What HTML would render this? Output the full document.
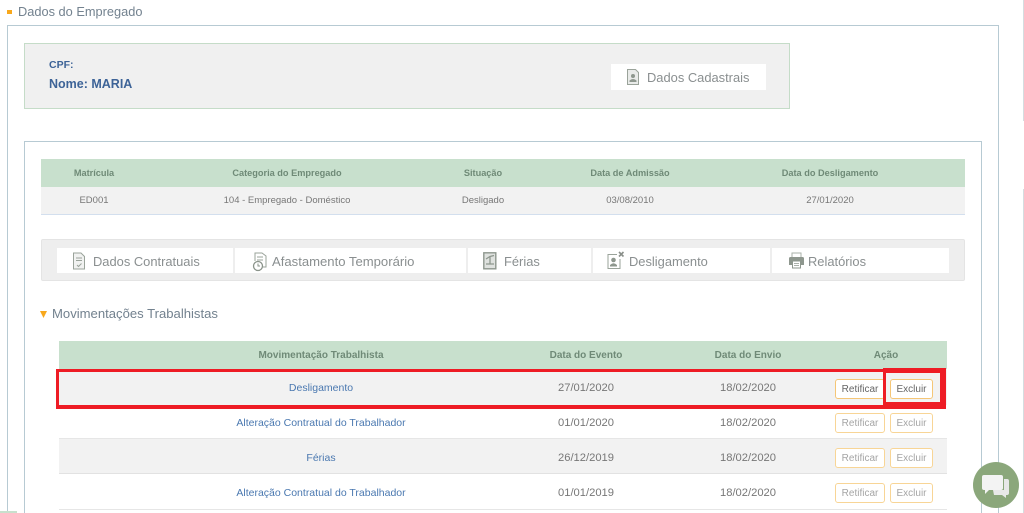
<!DOCTYPE html>
<html lang="pt-BR"><head><meta charset="utf-8"><title>Dados do Empregado</title>
<style>
html,body{margin:0;padding:0;background:#fff}
#p{position:relative;width:1024px;height:513px;overflow:hidden;background:#fff;font-family:"Liberation Sans",sans-serif;filter:blur(.3px)}
#p div,#p svg{position:absolute;box-sizing:border-box}
.t{white-space:nowrap;text-align:center;line-height:16px;height:16px}
.h{font-size:9.2px;color:#6f8a77;font-weight:bold}
.c{font-size:9.5px;color:#777}
.h2{font-size:10px;color:#6f8a77;font-weight:bold}
.c2{font-size:11.2px;color:#777}
.l{font-size:10.5px;color:#4a78b0}
.tab{background:#fff;height:25px;top:248px}
.tl{font-size:12.9px;color:#8a8f90;white-space:nowrap;line-height:16px;height:16px}
.b{height:20px;background:#fff;border:1px solid #f8d596;border-radius:3px;font-size:10px;color:#a5a5a5;text-align:center;line-height:20px}
.dark{border-color:#f5c676;color:#666}
.red{background:#ee1c25}
</style></head><body><div id="p">
<div style="left:7px;top:10px;width:5px;height:4px;background:#f8a81c"></div>
<div class="t" style="left:18px;top:4px;font-size:12.8px;color:#73828f">Dados do Empregado</div>
<div style="left:7px;top:25px;width:992px;height:488px;border:1px solid #b7cad3;border-bottom:0"></div>
<div style="left:24px;top:43px;width:766px;height:66px;background:#f0f0f0;border:1px solid #c5dcc8"></div>
<div class="t" style="left:49px;top:57px;font-size:10.5px;font-weight:bold;color:#3d6397">CPF:</div>
<div class="t" style="left:49px;top:76px;font-size:12.5px;font-weight:bold;color:#3d6397">Nome: MARIA</div>
<div style="left:611px;top:64px;width:155px;height:26px;background:#fff"></div>
<svg style="left:626px;top:68px" width="14" height="18" viewBox="0 0 14 18"><path d="M1.500 1.500H9.500L12.500 4.500V16.500H1.500Z" fill="#e9ebe9" stroke="#9aa39a"/><circle cx="7" cy="8" r="2" fill="#8e978e"/><path d="M3.500 14V12.500Q7 9.500 10.500 12.500V14Z" fill="#8e978e"/></svg>
<div class="tl" style="left:647px;top:70px">Dados Cadastrais</div>
<div style="left:24px;top:141px;width:958px;height:372px;border:1px solid #b7cad3;border-bottom:0"></div>
<div style="left:41px;top:159px;width:924px;height:28px;background:#c8e0cd"></div>
<div style="left:41px;top:187px;width:924px;height:28px;background:#f2f2f2;border-bottom:1px solid #d3dfee"></div>
<div class="t h" style="left:44px;width:100px;top:165px">Matrícula</div>
<div class="t h" style="left:187px;width:200px;top:165px">Categoria do Empregado</div>
<div class="t h" style="left:433px;width:100px;top:165px">Situação</div>
<div class="t h" style="left:570px;width:120px;top:165px">Data de Admissão</div>
<div class="t h" style="left:750px;width:160px;top:165px">Data do Desligamento</div>
<div class="t c" style="left:44px;width:100px;top:193px">ED001</div>
<div class="t c" style="left:187px;width:200px;top:193px">104 - Empregado - Doméstico</div>
<div class="t c" style="left:433px;width:100px;top:193px">Desligado</div>
<div class="t c" style="left:570px;width:120px;top:193px">03/08/2010</div>
<div class="t c" style="left:750px;width:160px;top:193px">27/01/2020</div>

<div style="left:41px;top:239px;width:924px;height:42px;background:#eee;border:1px solid #e4e4e4;border-radius:2px"></div>
<div class="tab" style="left:57px;width:176px"></div>
<div class="tab" style="left:235px;width:231px"></div>
<div class="tab" style="left:468px;width:123px"></div>
<div class="tab" style="left:593px;width:177px"></div>
<div class="tab" style="left:772px;width:177px"></div>
<svg style="left:72px;top:252px" width="14" height="18" viewBox="0 0 14 18"><path d="M1.500 1H9L12.500 4.500V17H1.500Z" fill="#f1f2f1" stroke="#9aa39a"/><path d="M4 6H10M4 8.500H10M5 13L6.500 14.500L9.500 11.500" fill="none" stroke="#9aa39a"/></svg>
<svg style="left:251px;top:252px" width="16" height="20" viewBox="0 0 16 20"><path d="M4 9V1H11L15 4V15H12" fill="none" stroke="#9aa39a"/><path d="M6 5H12M6 8H12" stroke="#9aa39a"/><circle cx="7" cy="14" r="4.500" fill="#fff" stroke="#8a938a" stroke-width="1.300"/><path d="M7 11.500V14H9" fill="none" stroke="#8a938a"/></svg>
<svg style="left:483px;top:252px" width="14" height="18" viewBox="0 0 14 18"><rect x=".8" y=".8" width="12" height="16" fill="#dfe2df" stroke="#8e978e" stroke-width="1.400"/><path d="M3 7L7 4.500L11 3.500M7 5V12M3 12H11" fill="none" stroke="#8e978e" stroke-width="1.300"/></svg>
<svg style="left:607px;top:251px" width="18" height="19" viewBox="0 0 18 19"><path d="M1 3.500H10M1 3V17.500H13V8" fill="none" stroke="#9aa39a"/><circle cx="6.500" cy="9" r="2.300" fill="#8e978e"/><path d="M3 15.500V14Q6.500 10.500 10 14V15.500Z" fill="#8e978e"/><path d="M12 1L16.500 5.500M16.500 1L12 5.500" stroke="#8a8f8a" stroke-width="1.600"/></svg>
<svg style="left:788px;top:252px" width="17" height="17" viewBox="0 0 17 17"><path d="M4 5V1H13V5" fill="none" stroke="#aab1aa"/><path d="M1 6.500Q1 5 2.500 5H14.500Q16 5 16 6.500V13H1Z" fill="#8e978e"/><rect x="4.500" y="9" width="8" height="7" fill="#fff" stroke="#8e978e"/><path d="M6 11.500H11M6 13.500H11" stroke="#aab1aa"/></svg>
<div class="tl" style="left:93px;top:254px">Dados Contratuais</div>
<div class="tl" style="left:272px;top:254px;font-size:13.1px">Afastamento Temporário</div>
<div class="tl" style="left:504px;top:254px">Férias</div>
<div class="tl" style="left:629px;top:254px">Desligamento</div>
<div class="tl" style="left:808px;top:254px">Relatórios</div>

<svg style="left:40px;top:311px" width="7" height="7" viewBox="0 0 7 7"><path d="M0 0H7L3.500 7Z" fill="#f8a81c"/></svg>
<div class="t" style="left:52px;top:306px;font-size:13.1px;color:#73828f">Movimentações Trabalhistas</div>

<div style="left:59px;top:341px;width:888px;height:28px;background:#c8e0cd"></div>
<div style="left:59px;top:369px;width:888px;height:36px;background:#f2f2f2"></div>
<div style="left:59px;top:439px;width:888px;height:35px;background:#f2f2f2;border-bottom:1px solid #e2e2e2"></div>
<div style="left:59px;top:405px;width:888px;height:34px;border-bottom:1px solid #e6e6e6"></div>
<div style="left:59px;top:474px;width:888px;height:36px;border-bottom:1px solid #e6e6e6"></div>

<div class="t h2" style="left:221px;width:200px;top:348px">Movimentação Trabalhista</div>
<div class="t h2" style="left:526px;width:120px;top:348px">Data do Evento</div>
<div class="t h2" style="left:688px;width:120px;top:348px">Data do Envio</div>
<div class="t h2" style="left:836px;width:100px;top:348px">Ação</div>

<div class="t l" style="left:171px;width:300px;top:380px">Desligamento</div>
<div class="t c2" style="left:526px;width:120px;top:380px">27/01/2020</div>
<div class="t c2" style="left:688px;width:120px;top:380px">18/02/2020</div>
<div class="t l" style="left:171px;width:300px;top:415px">Alteração Contratual do Trabalhador</div>
<div class="t c2" style="left:526px;width:120px;top:415px">01/01/2020</div>
<div class="t c2" style="left:688px;width:120px;top:415px">18/02/2020</div>
<div class="t l" style="left:171px;width:300px;top:450px">Férias</div>
<div class="t c2" style="left:526px;width:120px;top:450px">26/12/2019</div>
<div class="t c2" style="left:688px;width:120px;top:450px">18/02/2020</div>
<div class="t l" style="left:171px;width:300px;top:485px">Alteração Contratual do Trabalhador</div>
<div class="t c2" style="left:526px;width:120px;top:485px">01/01/2019</div>
<div class="t c2" style="left:688px;width:120px;top:485px">18/02/2020</div>

<div class="b dark" style="left:835px;top:379px;width:50px">Retificar</div>
<div class="b dark" style="left:890px;top:379px;width:43px">Excluir</div>
<div class="b" style="left:835px;top:413px;width:50px">Retificar</div>
<div class="b" style="left:890px;top:413px;width:43px">Excluir</div>
<div class="b" style="left:835px;top:448px;width:50px">Retificar</div>
<div class="b" style="left:890px;top:448px;width:43px">Excluir</div>
<div class="b" style="left:835px;top:483px;width:50px">Retificar</div>
<div class="b" style="left:890px;top:483px;width:43px">Excluir</div>

<div class="red" style="left:56px;top:369px;width:827px;height:3px"></div>
<div class="red" style="left:56px;top:405px;width:827px;height:4px"></div>
<div class="red" style="left:56px;top:369px;width:3px;height:40px"></div>
<div class="red" style="left:883px;top:368px;width:63px;height:5px"></div>
<div class="red" style="left:883px;top:402px;width:63px;height:7px"></div>
<div class="red" style="left:883px;top:368px;width:3px;height:41px"></div>
<div class="red" style="left:940px;top:368px;width:6px;height:41px"></div>

<svg style="left:973px;top:462px" width="46" height="46" viewBox="0 0 46 46"><circle cx="23" cy="23" r="23" fill="#8ba77b"/><path d="M31 17H34Q36 17 36 19V31Q36 33 34 33H33V36L29 33H21L20 28H31Z" fill="#e8e8e8"/><path d="M11 13H28Q30 13 30 15V26Q30 28 28 28H16L12 32V28H11Q9 28 9 26V15Q9 13 11 13Z" fill="#f3f3f3"/></svg>

<div style="left:1023px;top:0;width:1px;height:121px;background:#d5dde0"></div>
<div style="left:1023px;top:189px;width:1px;height:324px;background:#d5dde0"></div>
<div style="left:0;top:511px;width:17px;height:2px;background:#c8e0cd"></div>
</div></body></html>
